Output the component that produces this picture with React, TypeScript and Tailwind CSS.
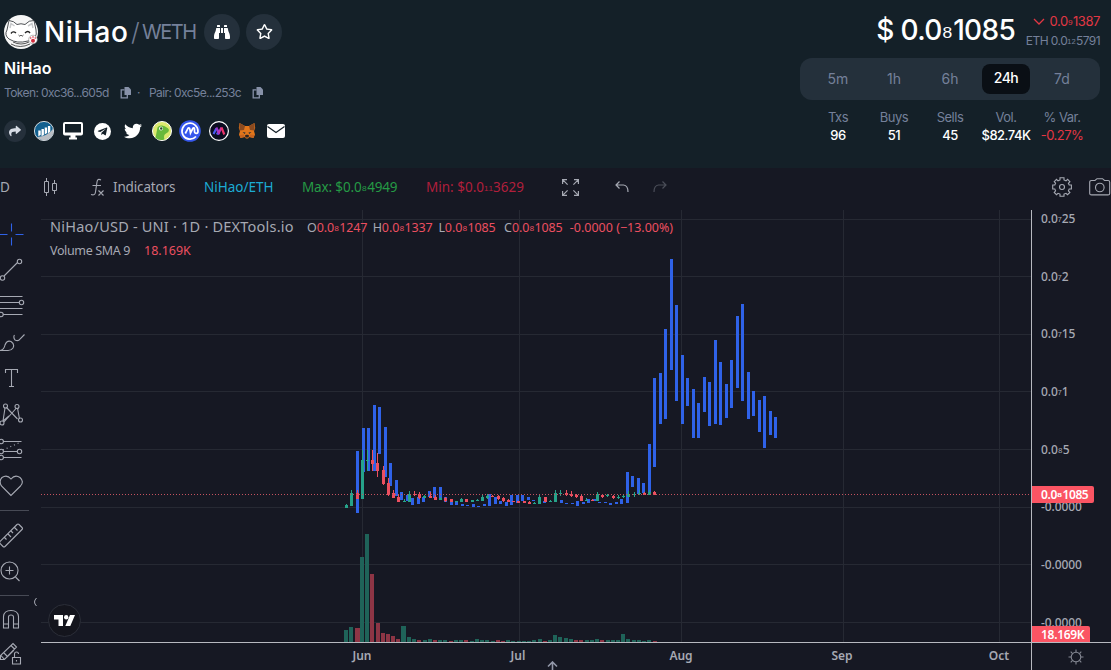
import React from "react";
import { FaBinoculars, FaRegStar, FaShare, FaTelegramPlane, FaTwitter } from "react-icons/fa";

type Bar = [number, number, number];
type Candle = [number, number, number, number, number, "g" | "r"];

const CHART_X = 41;
const CHART_Y = 210;

const rows = [218, 276, 334, 391, 449, 507, 564, 622];
const columns = [362, 519, 681, 843, 999];

const shift = (bars: Bar[], x: number, y: number): Bar[] =>
  bars.map(([a, b, c]) => [x + a / 3 - CHART_X, y + b / 3 - CHART_Y, y + c / 3 - CHART_Y]);

const shiftCandles = (list: Candle[], x: number, y: number): Candle[] =>
  list.map(([a, b, c, d, e, k]) => [
    x + a / 3 - CHART_X,
    y + b / 3 - CHART_Y,
    y + c / 3 - CHART_Y,
    y + d / 3 - CHART_Y,
    y + e / 3 - CHART_Y,
    k,
  ]);

const ranges: Bar[] = [
  ...shift(
    [
      [67, 168, 354], [85, 99, 231], [100, 99, 228], [118, 30, 228], [133, 36, 177], [151, 96, 246],
      [166, 204, 272], [184, 255, 303], [199, 291, 315], [217, 300, 318], [232, 309, 330], [250, 306, 327],
      [265, 306, 320], [283, 288, 305], [298, 276, 308], [316, 276, 315], [331, 306, 320], [349, 318, 330],
      [364, 318, 330], [382, 327, 332], [397, 330, 333], [415, 327, 336], [430, 333, 335], [448, 327, 332],
      [463, 297, 333], [481, 306, 327], [496, 318, 327],
    ],
    335, 395,
  ),
  ...shift(
    [
      [79, 186, 198], [94, 165, 195], [112, 165, 188], [127, 165, 182], [145, 171, 180], [160, 180, 184],
      [193, 184, 189], [211, 182, 187], [244, 180, 189], [260, 188, 192], [277, 188, 192], [292, 183, 198],
      [310, 186, 192], [325, 178, 188], [343, 178, 182], [358, 186, 190], [376, 186, 189], [391, 188, 195],
      [409, 186, 192], [424, 177, 192], [13, 192, 198], [28, 162, 195], [46, 171, 192], [61, 183, 192],
      [442, 96, 189],
    ],
    480, 440,
  ),
  ...shift(
    [
      [37, 678, 710], [55, 684, 732], [70, 699, 730], [88, 582, 725], [103, 384, 651], [121, 369, 522],
      [136, 237, 507], [154, 27, 360], [169, 165, 453], [187, 315, 522], [202, 384, 468], [220, 417, 564],
      [235, 459, 564], [253, 381, 486], [268, 396, 528], [286, 270, 522], [301, 336, 525], [319, 402, 504],
      [334, 330, 474], [352, 198, 414], [367, 162, 453], [385, 366, 507], [400, 423, 498], [418, 450, 546],
      [433, 438, 594], [451, 483, 555], [466, 501, 564],
    ],
    620, 250,
  ),
];

const candles: Candle[] = [
  ...shiftCandles(
    [
      [34, 327, 339, 330, 339, "g"], [49, 285, 333, 294, 333, "g"], [67, 285, 312, 294, 312, "r"],
      [82, 165, 312, 195, 312, "g"], [97, 165, 228, 195, 198, "g"], [112, 165, 228, 195, 207, "r"],
      [127, 174, 246, 204, 228, "r"], [145, 213, 270, 225, 267, "r"], [160, 249, 303, 264, 300, "r"],
      [175, 285, 309, 293, 309, "r"], [190, 297, 321, 306, 321, "r"], [208, 312, 321, 318, 320, "g"],
      [223, 288, 321, 297, 320, "g"], [238, 288, 303, 296, 298, "r"], [253, 290, 311, 297, 308, "r"],
      [268, 300, 309, 303, 308, "g"], [286, 290, 308, 303, 308, "r"], [301, 300, 315, 306, 315, "r"],
      [316, 306, 316, 309, 315, "g"], [331, 306, 321, 309, 318, "r"], [349, 311, 321, 312, 321, "r"],
      [364, 318, 322, 318, 321, "g"], [379, 309, 321, 312, 321, "g"], [394, 311, 321, 312, 321, "r"],
      [412, 314, 321, 315, 321, "g"], [427, 312, 318, 315, 317, "g"], [442, 297, 318, 306, 317, "g"],
    ],
    335, 395,
  ),
  ...shiftCandles(
    [
      [7, 162, 183, 171, 183, "g"], [22, 163, 177, 168, 175, "g"], [37, 165, 171, 167, 170, "r"],
      [55, 166, 180, 168, 178, "r"], [70, 171, 185, 174, 182, "r"], [85, 177, 186, 180, 186, "r"],
      [100, 183, 186, 183, 186, "r"], [115, 183, 188, 183, 188, "r"], [133, 183, 188, 184, 188, "r"],
      [148, 184, 192, 186, 192, "r"], [163, 185, 192, 188, 191, "g"], [178, 163, 192, 171, 192, "g"],
      [196, 170, 186, 171, 186, "r"], [211, 180, 186, 182, 185, "g"], [226, 151, 186, 158, 186, "g"],
      [241, 150, 168, 159, 161, "g"], [259, 150, 168, 159, 165, "r"], [274, 154, 171, 162, 168, "r"],
      [289, 162, 174, 165, 171, "r"], [304, 166, 183, 168, 183, "r"], [319, 174, 183, 180, 183, "g"],
      [337, 178, 182, 180, 182, "r"], [352, 156, 183, 163, 182, "g"], [367, 163, 174, 165, 171, "r"],
      [382, 162, 171, 165, 169, "g"], [400, 165, 177, 168, 174, "r"], [415, 166, 178, 171, 174, "g"],
      [430, 162, 175, 168, 171, "g"], [445, 153, 171, 162, 170, "g"], [463, 156, 171, 162, 165, "g"],
      [478, 150, 165, 158, 162, "g"], [493, 156, 165, 158, 165, "r"], [508, 150, 165, 156, 164, "g"],
      [523, 152, 165, 156, 165, "r"],
    ],
    480, 440,
  ),
];

const volumes: [number, string][] = [
  [12, "g"], [15, "g"], [14, "r"], [85, "g"], [108, "g"], [68, "r"], [19, "r"], [9, "r"], [8, "r"], [6, "r"],
  [3, "r"], [16, "g"], [5, "g"], [3, "g"], [2, "r"], [2, "g"], [3, "g"], [2, "r"], [2, "g"], [2, "g"],
  [1, "r"], [2, "g"], [2, "g"], [2, "r"], [1, "g"], [3, "g"], [2, "g"], [2, "g"], [1, "g"], [2, "r"],
  [1, "r"], [2, "g"], [1, "g"], [1, "g"], [1, "g"], [1, "g"], [2, "g"], [3, "g"], [1, "r"], [2, "g"],
  [7, "g"], [5, "g"], [4, "g"], [3, "g"], [2, "r"], [2, "r"], [2, "g"], [2, "g"], [3, "g"], [2, "r"],
  [2, "g"], [2, "g"], [2, "g"], [8, "g"], [3, "g"], [2, "g"], [2, "g"], [1, "g"], [2, "g"], [1, "r"],
];

const Sub = ({ children }: { children: string }) => (
  <span className="align-[0.13em] font-['Liberation_Sans'] text-[1em] leading-none tracking-normal">{children}</span>
);

function Chart() {
  return (
    <svg width="990" height="432" className="block" shapeRendering="crispEdges">
      {rows.map((y) => (
        <rect key={y} x="0" y={y + (y === 218 ? 1 : 0) - CHART_Y} width="990" height="1" fill="#262933" />
      ))}
      {columns.map((x) => (
        <rect key={x} x={x - CHART_X} y="0" width="1" height="432" fill="#262933" />
      ))}
      {volumes.map(([h, kind], i) => (
        <rect
          key={i}
          x={Math.round(303.2 + i * 5.226) - (i === 11 ? 1 : 0)}
          y={432 - h}
          width={i === 2 || i === 11 ? 5 : 4}
          height={h}
          fill={kind === "g" ? "#1f6359" : "#8d3545"}
        />
      ))}
      {ranges.map(([x, a, b], i) => (
        <rect key={i} x={Math.round(x - 1.5)} y={Math.round(a)} width="3" height={Math.max(1, Math.round(b) - Math.round(a))} fill="#2f62e8" />
      ))}
      {candles.map(([x, wt, wb, bt, bb, kind], i) => {
        const color = kind === "g" ? "#26a38a" : "#ec4f60";
        const left = Math.round(x - 1.5);
        return (
          <g key={i} fill={color}>
            <rect x={left + 1} y={Math.round(wt)} width="1" height={Math.max(1, Math.round(wb) - Math.round(wt))} />
            <rect x={left} y={Math.round(bt)} width="3" height={Math.max(1, Math.round(bb) - Math.round(bt))} />
          </g>
        );
      })}
      <path d="M0 284.5H990" stroke="#c5525f" strokeDasharray="1 2" />
    </svg>
  );
}

const Cat = () => (
  <svg width="34" height="34" viewBox="0 0 34 34">
    <circle cx="17" cy="17" r="17" fill="#f6f6f6" />
    <path d="M3 15 5 5.500Q10 6 13 9.500Q17 8 21 9.500Q25 5 30 5.500L32 15Q34 24 24 26Q13 29 5 24Q0 20 3 15Z" fill="#fff" stroke="#3c4044" strokeWidth=".9" />
    <path d="M6 13 7 8.500 10.500 11M24 11 28 8.500 29 13" fill="none" stroke="#c7c9cb" strokeWidth="1.500" />
    <path d="M7 18.500Q9 15.500 12 18M21 18Q24 15 26 18" fill="none" stroke="#222" strokeWidth="1.400" />
    <path d="M14.500 20Q16 22.500 17 20Q18 22.500 19.500 20M9 27Q17 31 25 27M7 29Q16 34 26 29" fill="none" stroke="#444" strokeWidth=".9" />
    <circle cx="29" cy="24.500" r="4.300" fill="#fff" stroke="#888" strokeWidth=".6" />
    <circle cx="29" cy="25.700" r="2" fill="#d12c3d" />
    <circle cx="26.700" cy="23" r=".8" fill="#d12c3d" />
    <circle cx="29" cy="22" r=".8" fill="#d12c3d" />
    <circle cx="31.300" cy="23" r=".8" fill="#d12c3d" />
  </svg>
);

const Copy = () => (
  <svg width="12" height="12" viewBox="0 0 12 12">
    <path d="M4.500 0H8.500L11 2.500V8H4.500Z" fill="#8791a8" />
    <path d="M4.500 2.900H1.200V10.800H7.300V8" fill="none" stroke="#8791a8" strokeWidth="1.300" />
  </svg>
);

function Links() {
  return (
    <div className="ml-1 flex h-[22px] items-center">
      <span className="flex size-[22px] items-center justify-center rounded-full bg-[#25303b] text-[#d8dde6]">
        <FaShare size={12} />
      </span>
      <svg className="ml-2" width="20" height="20" viewBox="0 0 20 20">
        <circle cx="10" cy="10" r="9.600" fill="#12608f" stroke="#fff" strokeWidth=".8" />
        <path d="M3 16Q14 15 18.900 8A9 9 0 0 1 5.500 18Z" fill="#b9bec4" />
        <path d="M4.300 9.500h2.400V14l-2.400 1.200zM7.500 8h2.400v6l-2.400 1.200zM10.700 6.500h2.400V12l-2.400 1.500zM13.900 5h2.400v5.500l-2.400 2z" fill="#fff" />
      </svg>
      <svg className="ml-[9px]" width="20" height="18" viewBox="0 0 20 18">
        <path d="M2 0H18Q20 0 20 2V11.500Q20 13.500 18 13.500H12.500V15.500H14V17.500H6V15.500H7.500V13.500H2Q0 13.500 0 11.500V2Q0 0 2 0ZM2 2V10.500H18V2Z" fill="#fff" fillRule="evenodd" />
      </svg>
      <span className="ml-[11px] flex size-[17px] items-center justify-center rounded-full bg-white text-[#142028]">
        <FaTelegramPlane size={11} />
      </span>
      <FaTwitter className="ml-[13px] text-white" size={18} />
      <svg className="ml-[10px]" width="20" height="20" viewBox="0 0 20 20">
        <circle cx="10" cy="10" r="9.500" fill="#dce96f" stroke="#fff" />
        <path d="M3.500 17Q5 9 5.500 6.500Q7 4 10 4.500Q16 6 17 9Q17 11 14 12.500Q11 14 12.500 18.500Q7 20 3.500 17Z" fill="#68b93b" />
        <circle cx="9" cy="7.500" r="1.900" fill="#fff" />
        <circle cx="9.200" cy="7.500" r="1.200" fill="#2b4a25" />
      </svg>
      <svg className="ml-[7px]" width="22" height="22" viewBox="0 0 22 22">
        <circle cx="11" cy="11" r="10.800" fill="#3657ec" />
        <path d="M17 16.500A8 8 0 1 1 19 11.200C19 14 15.600 14.200 15.500 11.500V9C15.500 7.500 14.300 7.500 13.800 8.500L11.500 13 10.800 9C10.500 7.600 9.300 7.600 8.700 8.800L6.300 13.500" fill="none" stroke="#fff" strokeWidth="1.700" />
      </svg>
      <svg className="ml-[8px]" width="20" height="20" viewBox="0 0 20 20">
        <circle cx="10" cy="10" r="9.400" fill="#0b0c20" stroke="#fff" strokeWidth="1.200" />
        <path d="M4.500 13 7.300 7.500M8 13.500 10.200 9" stroke="#4a5bf2" strokeWidth="2.200" />
        <path d="M7.300 6.500 10.200 13.500" stroke="#9b35c9" strokeWidth="2.200" />
        <path d="M12.500 6.500 9.800 12" stroke="#c431b0" strokeWidth="2.200" />
        <path d="M12.500 6.500 15.300 13.500" stroke="#ed3569" strokeWidth="2.200" />
      </svg>
      <svg className="ml-[9px]" width="18" height="16" viewBox="0 0 18 16">
        <path d="M1.500 0 7 3H11L16.500 0 17.200 5 16 8 17 11.500 15.500 15 11.500 14 10 15.500H8L6.500 14 2.500 15 1 11.500 2 8 .8 5Z" fill="#e2761b" />
        <path d="M1.500 0 7 3 6 7 1.500 7.500ZM16.500 0 11 3 12 7 16.500 7.500Z" fill="#8a4a20" />
        <path d="M4.500 9 7.500 9.500 6.800 11ZM13.500 9 10.500 9.500 11.200 11Z" fill="#26303b" />
        <path d="M7 12.500 8 11.800H10L11 12.500 10.500 14.500H7.500Z" fill="#2d2220" />
        <path d="M1.500 12 6 11.500 6.500 14 2.500 15ZM16.500 12 12 11.500 11.500 14 15.500 15Z" fill="#c8641f" />
      </svg>
      <svg className="ml-[11px]" width="18" height="14" viewBox="0 0 18 14">
        <rect width="18" height="14" rx="2" fill="#fff" />
        <path d="M.5 2.500 9 8.500 17.500 2.500" fill="none" stroke="#142028" strokeWidth="1.200" />
      </svg>
    </div>
  );
}

const stats = [
  { tab: "5m", label: "Txs", value: "96" },
  { tab: "1h", label: "Buys", value: "51" },
  { tab: "6h", label: "Sells", value: "45" },
  { tab: "24h", label: "Vol.", value: "$82.74K" },
  { tab: "7d", label: "% Var.", value: "-0.27%" },
];

function Header() {
  return (
    <header className="flex h-[168px] shrink-0 justify-between bg-[#142028] font-['Inter',sans-serif]">
      <div className="pt-[14px]">
        <div className="flex h-9 items-center pl-1">
          <Cat />
          <span className="ml-[6px] w-[87px] text-[28px] leading-9 font-medium tracking-[0.5px] text-white">NiHao</span>
          <span className="w-[11px] text-[25px] leading-9 font-light text-[#717c92]">/</span>
          <span className="w-[62px] text-[20px] leading-9 tracking-[-1.5px] text-[#75809a]">WETH</span>
          <span className="flex size-9 items-center justify-center rounded-full bg-[#24303b] text-white">
            <FaBinoculars size={16} />
          </span>
          <span className="ml-[6px] flex size-9 items-center justify-center rounded-full bg-[#24303b] pb-px text-white">
            <FaRegStar size={17} />
          </span>
        </div>
        <div className="mt-[6px] pl-1 text-[16px] leading-6 font-semibold tracking-[0.1px] text-white">NiHao</div>
        <div className="mt-1 flex h-[18px] items-center pl-1 text-[12px] text-[#75809a]">
          <span className="w-[116px] tracking-[-0.6px]">Token: 0xc36...605d</span>
          <Copy />
          <span className="ml-[5px] w-[12px]">·</span>
          <span className="w-[103px] tracking-[-0.6px]">Pair: 0xc5e...253c</span>
          <Copy />
        </div>
        <div className="mt-[18px]">
          <Links />
        </div>
      </div>
      <div className="mr-[11px] w-[300px] pt-2">
        <div className="flex h-[46px] justify-end">
          <div className="mr-[10px] text-[28px] leading-[45px] font-medium tracking-[-0.7px] whitespace-nowrap text-white">
            $ 0.0<Sub>₈</Sub>1085
          </div>
          <div className="flex w-[75px] shrink-0 flex-col items-end pt-[5px] whitespace-nowrap">
            <div className="flex h-[18px] items-center justify-end text-[13px] tracking-[-0.4px] text-[#e23744]">
              <svg className="mr-1" width="12" height="8" viewBox="0 0 12 8" fill="none" stroke="#e23744" strokeWidth="1.300">
                <path d="m1 1 5 5 5-5" />
              </svg>
              <span>0.0<Sub>₉</Sub>1387</span>
            </div>
            <div className="text-[12px] leading-[20px] tracking-[-0.55px] text-[#75809a]">
              ETH 0.0<Sub>₁₂</Sub>5791
            </div>
          </div>
        </div>
        <div className="mt-1 grid h-[42px] grid-cols-5 items-center rounded-xl bg-[#24303b] px-[10px] text-center text-[14px] leading-[41px] text-[#75809a]">
          {stats.map((s) => (
            <span
              key={s.tab}
              className={s.tab === "24h" ? "mx-1 h-[30px] rounded-lg bg-[#0a0f15] leading-[28px] font-medium tracking-[-0.5px] text-white" : "h-[42px]"}
            >
              {s.tab}
            </span>
          ))}
        </div>
        <div className="mt-2 grid grid-cols-5 px-[10px] text-center text-[13px] leading-[18px] whitespace-nowrap">
          {stats.map((s) => (
            <div key={s.label} className="flex flex-col items-center tracking-[-0.5px]">
              <span className="text-[#75809a]">{s.label}</span>
              <span className={s.label === "% Var." ? "text-[#e23744]" : "font-medium text-white"}>{s.value}</span>
            </div>
          ))}
        </div>
      </div>
    </header>
  );
}

function Toolbar() {
  return (
    <div className="flex h-[38px] shrink-0 items-center text-[13.5px] whitespace-nowrap text-[#a6a9b3]">
      <span className="w-[43px]">D</span>
      <svg width="16" height="20" viewBox="0 0 16 20" fill="none" stroke="#a6a9b3">
        <path d="M1.500 4.500h4v11h-4zM3.500 1v3M3.500 16v3M9.500 6.500h4v7h-4zM11.500 3v3M11.500 14v3" />
      </svg>
      <svg className="ml-[31px]" width="15" height="19" viewBox="0 0 15 19" fill="none" stroke="#a6a9b3" strokeWidth="1.100">
        <path d="M11 2Q7.500 0 7 4L5.500 14Q5 18 1 16.500M2.500 7.500H11M8.500 12.500l5 5M13.500 12.500l-5 5" />
      </svg>
      <span className="ml-2 w-[91px] tracking-[-0.15px]">Indicators</span>
      <span className="w-[98px] text-[#1cabd3]">NiHao/ETH</span>
      <span className="w-[124px] tracking-[-0.15px] text-[#259a45]">Max: $0.0<Sub>₈</Sub>4949</span>
      <span className="w-[136px] text-[#b11f3c]">Min: $0.0<Sub>₁₁</Sub>3629</span>
      <svg width="17" height="17" viewBox="0 0 17 17" fill="none" stroke="#a6a9b3" strokeWidth="1.200">
        <path d="M.6 5V.6H5M.6.6l5 5M12 .6h4.400V5M16.400.6l-5 5M.6 12v4.400H5M.6 16.400l5-5M12 16.400h4.400V12M16.400 16.400l-5-5" />
      </svg>
      <svg className="ml-[36px]" width="14" height="12" viewBox="0 0 14 12" fill="none" stroke="#a6a9b3" strokeWidth="1.200">
        <path d="M4.500.5 1 4l3.500 3.500M1 4h7.500Q13 4.500 13 11" />
      </svg>
      <svg className="ml-6" width="14" height="12" viewBox="0 0 14 12" fill="none" stroke="#4b4e59" strokeWidth="1.200">
        <path d="M9.500.5 13 4 9.500 7.500M13 4H5.500Q1 4.500 1 11" />
      </svg>
      <svg className="ml-auto" width="20" height="20" viewBox="0 0 20 20" fill="none" stroke="#a6a9b3" strokeWidth="1.100">
        <path d="M8 .7h4v2.200l2 .9 1.600-1.500 2.300 2.400L16.400 6.300 17.200 8h2.200v4h-2.200l-.8 1.900 1.500 1.500-2.400 2.300-1.500-1.400-2 .8v2.200H8v-2.200l-2-.8-1.500 1.400-2.300-2.300 1.400-1.500L2.800 12H.7V8h2.100l.8-1.800-1.400-1.500 2.300-2.400L6 3.800l2-.9Z" />
        <circle cx="10" cy="10" r="2.500" />
      </svg>
      <svg className="ml-[17px]" width="22" height="18" viewBox="0 0 22 18" fill="none" stroke="#a6a9b3" strokeWidth="1.100">
        <path d="M2.500 2.500H6L8 .7h5.500l2 1.800H19q1.700 0 1.700 1.700v11.200q0 1.500-1.700 1.500H2.500Q.7 16.900.7 15.400V4.200Q.7 2.500 2.500 2.500Z" />
        <circle cx="10.800" cy="9.500" r="4.300" />
      </svg>
    </div>
  );
}

const Tool = ({ children, tone = "#a6a9b3" }: { children: React.ReactNode; tone?: string }) => (
  <svg className="block h-[36px] w-[28px] shrink-0" viewBox="0 0 28 36" fill="none" stroke={tone} strokeWidth="1.100">
    {children}
  </svg>
);

function DrawingTools() {
  return (
    <aside className="flex w-[41px] shrink-0 flex-col pt-[10px]">
      <Tool tone="#2f62e8"><path d="M11.500 7.500v8M11.500 21.500v8M0 18.500h7.500M15.500 18.500h8" /></Tool>
      <Tool><path d="m4 24 13.500-13.500" /><circle cx="2.500" cy="26" r="2.200" /><circle cx="19.500" cy="9.500" r="2.200" /></Tool>
      <Tool><path d="M0 8.500h22.500M0 14.500h19M0 20.500h22.500M3 26.500h19.500" /><circle cx="21.500" cy="14.500" r="2.200" /><circle cx="1" cy="26.500" r="2.200" /></Tool>
      <Tool><path d="M0 26.500Q4 26 5 21Q7 16 11 17.500Q15 20 13 24Q11 27 7 26.500ZM14.500 11q-1.500 2 .5 5 3.500 1.500 5-1l4.500-4.500" /></Tool>
      <Tool><path d="M5.500 13v-3.500h12V13M11.500 9.500v17M9 26.500h5" /></Tool>
      <Tool><path d="m3 25 2-13M6.500 11.500l11 11.500M19.500 23l-2-11M4 26 16 12.500M3 25l6-5" /><circle cx="2" cy="27" r="2" /><circle cx="5.500" cy="10" r="2" /><circle cx="17" cy="10.500" r="2" /><circle cx="20.500" cy="24" r="2" /></Tool>
      <Tool><path d="M3 9.500h18.500M3 19.500h15M3 25.500h18.500" /><path d="m3 18 18-8" strokeDasharray="1 3" /><circle cx="1.200" cy="9.500" r="2.200" /><circle cx="1.200" cy="19.500" r="2.200" /><circle cx="1.200" cy="25.500" r="2.200" /><circle cx="19.500" cy="19.500" r="2.200" /></Tool>
      <Tool><path d="M11 27.500 1.500 18Q-1.500 13 2 9.500Q7 6 11 11Q15 6 20 9.500Q24.500 13.500 20.500 18Z" /></Tool>
      <div className="mt-[6px] h-px w-[29px] shrink-0 bg-[#474a55]" />
      <div className="mt-[6px]" />
      <Tool><path d="M-.5 25 17 7.500q1-1 2 0l3 3q1 1 0 2L5 29.500q-1 1-2 0l-3-3ZM4.500 20.500l2 2M8 17l3 3M11 14l2 2M14.500 10.500l3 3" /></Tool>
      <Tool><circle cx="9.500" cy="17.500" r="8.500" /><path d="M5.500 17.500h8M9.500 13.500v8M15.500 24l4 4" /></Tool>
      <div className="mt-[6px] flex h-px shrink-0 items-center">
        <div className="h-px w-[29px] bg-[#474a55]" />
        <svg className="mt-[13px] ml-1 shrink-0" width="5" height="8" viewBox="0 0 5 8" fill="none" stroke="#a6a9b3"><path d="M3.500 0Q-.5 4 3.500 8" /></svg>
      </div>
      <div className="mt-[5px]" />
      <Tool><path d="M3.500 27V15.500Q4 9.500 11 9.500T18.500 15.500V27h-5V16Q13.500 14 11 14T8.500 16V27ZM3.500 23h5M13.500 23h5" /></Tool>
      <Tool><path d="M.5 22.500v-4L13 6.500l3.500 3.500L4.500 22.500ZM1 18.500l3.500 4M4 16l3 3M11 8.500l3.500 3.500M7 20l7-7" /><path d="M12.500 20.500h8v6.500h-8zM14.500 20v-3q0-2 2-2t2 2M16.500 23v1.500" /></Tool>
    </aside>
  );
}

const prices: [React.ReactNode, string][] = [
  [<>0.0<Sub>₇</Sub>25</>, "a"],
  [<>0.0<Sub>₇</Sub>2</>, "b"],
  [<>0.0<Sub>₇</Sub>15</>, "c"],
  [<>0.0<Sub>₇</Sub>1</>, "d"],
  [<>0.0<Sub>₈</Sub>5</>, "e"],
  ["-0.0000", "f"],
  ["-0.0000", "g"],
  ["-0.0000", "h"],
];

function PriceAxis() {
  return (
    <div className="relative w-[80px] shrink-0 border-l border-[#b7b9c0]">
      <div className="flex h-[432px] flex-col overflow-hidden text-[12px] font-medium tracking-[-0.1px] text-[#a6a9b3]">
        {prices.map(([text, key]) => (
          <div key={key} className="h-[57.7px] shrink-0 pl-[9px] leading-[18px]">{text}</div>
        ))}
      </div>
      <div className="absolute top-[276px] left-0 h-[17px] w-[62px] rounded-r-[2px] bg-[#fb5463] pl-[9px] text-[12px] leading-[17px] font-semibold tracking-[-0.4px] text-white">
        0.0<Sub>₈</Sub>1085
      </div>
      <div className="absolute top-[416px] left-0 h-[16px] w-[58px] rounded-tr-[2px] bg-[#fb5463] pl-[9px] text-[12px] leading-[17px] font-semibold tracking-[-0.3px] text-white">
        18.169K
      </div>
      <div className="flex h-[28px] items-center border-t border-[#b7b9c0] pl-[36px]">
        <svg width="16" height="16" viewBox="0 0 16 16" fill="none" stroke="#858893" strokeWidth="1.100">
          <circle cx="8" cy="8" r="4.800" />
          <path d="M8 .5v2.500M8 13v2.500M.5 8H3M13 8h2.500M2.700 2.700l1.600 1.600M11.700 11.700l1.600 1.600M13.300 2.700l-1.600 1.600M4.300 11.700l-1.600 1.600" />
        </svg>
      </div>
    </div>
  );
}

const ohlc: [string, string][] = [["O", "1247"], ["H", "1337"], ["L", "1085"], ["C", "1085"]];

function Legend() {
  return (
    <div className="absolute top-[8px] left-[9px] whitespace-nowrap text-[#a6a9b3]">
      <div className="flex h-[18px] items-center">
        <span className="w-[257px] text-[14.5px] tracking-[0.22px]">NiHao/USD - UNI · 1D · DEXTools.io</span>
        {ohlc.map(([name, value]) => (
          <span key={name} className="w-[65.7px] pt-0.5 text-[12.5px] tracking-[-0.1px]">
            {name}<span className="text-[#ec4f60]">0.0<Sub>₈</Sub>{value}</span>
          </span>
        ))}
        <span className="pt-0.5 text-[12.5px] text-[#ec4f60]">-0.0000 (−13.00%)</span>
      </div>
      <div className="mt-[6px] flex h-[18px] items-center text-[12.5px]">
        <span className="w-[94px] tracking-[-0.35px]">Volume SMA 9</span>
        <span className="text-[#ec4f60]">18.169K</span>
      </div>
    </div>
  );
}

export default function App() {
  return (
    <div className="flex h-[670px] w-[1111px] flex-col overflow-hidden bg-[#161823] font-['Noto_Sans',sans-serif]">
      <Header />
      <Toolbar />
      <div className="flex h-[464px]">
        <DrawingTools />
        <main className="relative mt-1 w-[990px] shrink-0">
          <Chart />
          <Legend />
          <div className="absolute top-[394px] left-[7px] flex size-[33px] items-center justify-center rounded-full border border-[#2b2e38] bg-[#14151d]">
            <svg width="21" height="11" viewBox="0 0 21 11" fill="#fff">
              <path d="M0 0h9v11H4.500V4.500H0ZM16 0h5l-4.700 11h-5Z" />
              <circle cx="12.200" cy="2.300" r="2.200" />
            </svg>
          </div>
          <div className="relative flex h-[28px] border-t border-[#b7b9c0] text-[12px] leading-[26px] font-semibold text-[#a6a9b3]">
            <span className="ml-[301px] w-[40px] text-center">Jun</span>
            <span className="ml-[116px] w-[40px] text-center">Jul</span>
            <span className="ml-[123px] w-[40px] text-center">Aug</span>
            <span className="ml-[121px] w-[40px] text-center">Sep</span>
            <span className="ml-[117px] w-[40px] text-center">Oct</span>
            <svg className="absolute top-[18px] left-[506px]" width="11" height="10" viewBox="0 0 11 10" fill="none" stroke="#9297a8" strokeWidth="1.600">
              <path d="M1 5.500 5.500 1 10 5.500M5.500 1v9" />
            </svg>
          </div>
        </main>
        <div className="mt-1 flex"><PriceAxis /></div>
      </div>
    </div>
  );
}
